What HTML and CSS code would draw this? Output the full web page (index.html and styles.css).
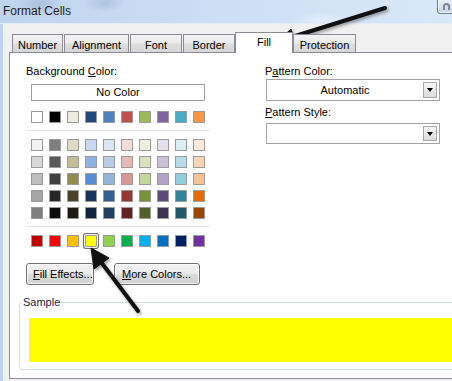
FILE: index.html
```html
<!DOCTYPE html>
<html>
<head>
<meta charset="utf-8">
<link rel="stylesheet" href="styles.css">
</head>
<body>
<div class="window">
  <div class="titlebar">
    <span class="title">Format Cells</span>
    <span class="helpbtn"><span class="helpglyph"></span></span>
  </div>
  <div class="client">
    <div class="tabs">
      <div class="tab t-number">Number</div>
      <div class="tab t-align">Alignment</div>
      <div class="tab t-font">Font</div>
      <div class="tab t-border">Border</div>
      <div class="tab active t-fill">Fill</div>
      <div class="tab t-prot">Protection</div>
    </div>
    <div class="panel">
      <div class="top">
        <div class="left">
          <div class="label">Background <u>C</u>olor:</div>
          <div class="nocolor">No Color</div>
          <div class="swrow">
            <span class="sw" style="background:#ffffff"></span>
            <span class="sw" style="background:#000000"></span>
            <span class="sw" style="background:#eeece1"></span>
            <span class="sw" style="background:#1f497d"></span>
            <span class="sw" style="background:#4f81bd"></span>
            <span class="sw" style="background:#c0504d"></span>
            <span class="sw" style="background:#9bbb59"></span>
            <span class="sw" style="background:#8064a2"></span>
            <span class="sw" style="background:#4bacc6"></span>
            <span class="sw" style="background:#f79646"></span>
          </div>
          <div class="sep"></div>
          <div class="swgrid">
            <span class="sw" style="background:#f2f2f2"></span>
            <span class="sw" style="background:#7f7f7f"></span>
            <span class="sw" style="background:#ddd9c3"></span>
            <span class="sw" style="background:#c6d9f0"></span>
            <span class="sw" style="background:#dbe5f1"></span>
            <span class="sw" style="background:#f2dcdb"></span>
            <span class="sw" style="background:#ebf1dd"></span>
            <span class="sw" style="background:#e5e0ec"></span>
            <span class="sw" style="background:#dbeef3"></span>
            <span class="sw" style="background:#fdeada"></span>

            <span class="sw" style="background:#d8d8d8"></span>
            <span class="sw" style="background:#595959"></span>
            <span class="sw" style="background:#c4bd97"></span>
            <span class="sw" style="background:#8db3e2"></span>
            <span class="sw" style="background:#b8cce4"></span>
            <span class="sw" style="background:#e5b9b7"></span>
            <span class="sw" style="background:#d7e3bc"></span>
            <span class="sw" style="background:#ccc1d9"></span>
            <span class="sw" style="background:#b7dde8"></span>
            <span class="sw" style="background:#fbd5b5"></span>

            <span class="sw" style="background:#bfbfbf"></span>
            <span class="sw" style="background:#3f3f3f"></span>
            <span class="sw" style="background:#938953"></span>
            <span class="sw" style="background:#548dd4"></span>
            <span class="sw" style="background:#95b3d7"></span>
            <span class="sw" style="background:#d99694"></span>
            <span class="sw" style="background:#c3d69b"></span>
            <span class="sw" style="background:#b2a2c7"></span>
            <span class="sw" style="background:#92cddc"></span>
            <span class="sw" style="background:#fac08f"></span>

            <span class="sw" style="background:#a5a5a5"></span>
            <span class="sw" style="background:#262626"></span>
            <span class="sw" style="background:#494429"></span>
            <span class="sw" style="background:#17365d"></span>
            <span class="sw" style="background:#366092"></span>
            <span class="sw" style="background:#953734"></span>
            <span class="sw" style="background:#76923c"></span>
            <span class="sw" style="background:#5f497a"></span>
            <span class="sw" style="background:#31859b"></span>
            <span class="sw" style="background:#e36c09"></span>

            <span class="sw" style="background:#7f7f7f"></span>
            <span class="sw" style="background:#0c0c0c"></span>
            <span class="sw" style="background:#1d1b10"></span>
            <span class="sw" style="background:#0f243e"></span>
            <span class="sw" style="background:#244061"></span>
            <span class="sw" style="background:#632423"></span>
            <span class="sw" style="background:#4f6128"></span>
            <span class="sw" style="background:#3f3151"></span>
            <span class="sw" style="background:#205867"></span>
            <span class="sw" style="background:#974806"></span>
          </div>
          <div class="sep"></div>
          <div class="swrow std">
            <span class="sw" style="background:#c00000"></span>
            <span class="sw" style="background:#ff0000"></span>
            <span class="sw" style="background:#ffc000"></span>
            <span class="sw selected" style="background:#ffff00"></span>
            <span class="sw" style="background:#92d050"></span>
            <span class="sw" style="background:#00b050"></span>
            <span class="sw" style="background:#00b0f0"></span>
            <span class="sw" style="background:#0070c0"></span>
            <span class="sw" style="background:#002060"></span>
            <span class="sw" style="background:#7030a0"></span>
          </div>
          <div class="btnrow">
            <div class="btn b-fill"><u>F</u>ill Effects...</div>
            <div class="btn b-more"><u>M</u>ore Colors...</div>
          </div>
        </div>
        <div class="right">
          <div class="label">P<u>a</u>ttern Color:</div>
          <div class="combo c1"><span class="ctext">Automatic</span><span class="cbtn"><span class="tri"></span></span></div>
          <div class="label l2"><u>P</u>attern Style:</div>
          <div class="combo c2"><span class="ctext"></span><span class="cbtn"><span class="tri"></span></span></div>
        </div>
      </div>
      <fieldset class="sample">
        <legend>Sample</legend>
        <div class="fillbox"></div>
      </fieldset>
    </div>
  </div>
  <svg class="arrows" width="452" height="381" viewBox="0 0 452 381">
    <defs>
      <filter id="blur" x="-20%" y="-20%" width="140%" height="140%">
        <feGaussianBlur stdDeviation="1.6"/>
      </filter>
    </defs>
    <g transform="translate(1.5,2)" filter="url(#blur)" fill="#555" stroke="#555" opacity="0.55">
      <line x1="385" y1="8" x2="292" y2="37" stroke-width="4" stroke-linecap="round"/>
      <polygon points="277,42 296,46 291,29"/>
      <line x1="138" y1="311" x2="101" y2="262" stroke-width="4" stroke-linecap="round"/>
      <polygon points="91,248 94,269 109,258"/>
    </g>
    <g fill="#111" stroke="#111">
      <line x1="385" y1="8" x2="292" y2="37" stroke-width="4" stroke-linecap="round"/>
      <polygon points="277,42 296,46 291,29" stroke-width="1" stroke-linejoin="round"/>
      <line x1="138" y1="311" x2="101" y2="262" stroke-width="4" stroke-linecap="round"/>
      <polygon points="91,248 94,269 109,258" stroke-width="1" stroke-linejoin="round"/>
    </g>
  </svg>
</div>
</body>
</html>
```

FILE: styles.css
```css
* { box-sizing: border-box; }
html, body { margin: 0; padding: 0; }
body {
  font-family: "Liberation Sans", Arial, sans-serif;
  font-size: 11px;
  color: #000;
  background: #f0f0f0;
}
.window {
  position: relative;
  width: 452px;
  height: 381px;
  overflow: hidden;
  display: flex;
  flex-direction: column;
  background: #f0f0f0;
}
.titlebar {
  position: relative;
  height: 24px;
  flex: none;
  padding-left: 3px;
  background:
    radial-gradient(ellipse 22px 10px at 40px 4px, rgba(150,175,205,0.55), rgba(150,175,205,0) 100%),
    radial-gradient(ellipse 20px 9px at 105px 3px, rgba(150,175,205,0.5), rgba(150,175,205,0) 100%),
    radial-gradient(ellipse 30px 8px at 320px 20px, rgba(255,255,255,0.4), rgba(255,255,255,0) 100%),
    linear-gradient(to right, #bfd5ec 0%, #c9ddf2 40%, #d3e4f6 75%, #d9e8f7 100%);
  border-bottom: 1px solid #e4edf7;
}
.title {
  display: block;
  font-family: "Liberation Sans", Arial, sans-serif;
  font-size: 12px;
  line-height: 14px;
  padding-top: 4px;
  color: #1e1e1e;
}
.helpbtn {
  position: absolute;
  left: 437px;
  top: -4px;
  width: 26px;
  height: 18px;
  border: 1px solid #6c7f97;
  border-radius: 3px;
  background: linear-gradient(#eef3f9, #c9d6e5);
  box-shadow: inset 0 0 0 1px rgba(255,255,255,0.7);
}
.helpglyph {
  position: absolute;
  left: 5px;
  top: 6px;
  width: 7px;
  height: 7px;
  border: 2px solid #7a8797;
  border-bottom: none;
  border-radius: 4px 4px 0 0;
}
.client {
  flex: 1;
  display: flex;
  flex-direction: column;
  padding: 8px 0 2px 6px;
  border-left: 3px solid #bcd3eb;
  background: #f0f0f0;
}
.tabs {
  display: flex;
  align-items: flex-end;
  height: 21px;
  margin-bottom: -1px;
  padding-left: 3px;
  position: relative;
  z-index: 1;
}
.tab {
  height: 18px;
  margin-bottom: 1px;
  margin-right: 1px;
  padding-top: 3px;
  line-height: 14px;
  text-align: center;
  border: 1px solid #898c95;
  border-bottom: none;
  background: linear-gradient(#f3f3f3 0%, #ebebeb 45%, #dedede 55%, #d6d6d6 100%);
  white-space: nowrap;
}
.t-number { width: 51px; }
.t-align { width: 65px; }
.t-font { width: 52px; }
.t-border { width: 52px; margin-right: 0; }
.tab.active {
  height: 21px;
  margin-bottom: 0;
  margin-right: 0;
  width: 58px;
  padding-top: 2px;
  background: #fff;
  position: relative;
  z-index: 2;
}
.t-prot { width: 63px; }
.panel {
  width: 470px;
  height: 327px;
  flex: none;
  border: 1px solid #898c95;
  background: #fff;
  padding: 10px 0 0 16px;
  display: flex;
  flex-direction: column;
}
.top {
  display: flex;
  gap: 55px;
}
.left {
  width: 184px;
  display: flex;
  flex-direction: column;
}
.label {
  height: 14px;
  line-height: 14px;
  white-space: nowrap;
}
.left .label { margin-top: 1px; }
.nocolor {
  margin: 6px 0 0 5px;
  width: 174px;
  height: 17px;
  border: 1px solid #a0a0a0;
  text-align: center;
  line-height: 15px;
  background: #fff;
}
.swrow {
  display: flex;
  gap: 6px;
  margin: 10px 0 0 5px;
}
.sw {
  display: block;
  width: 12px;
  height: 12px;
  border: 1px solid #9b9b9b;
  flex: none;
}
.sw.selected {
  border-radius: 1px;
  box-shadow: 0 0 0 1px #f4f4f4, 0 0 0 2px #6f6f6f;
}
.sep {
  height: 1px;
  background: #e2e2e2;
  margin-top: 7px;
}
.swgrid {
  display: grid;
  grid-template-columns: repeat(10, 12px);
  column-gap: 6px;
  row-gap: 5px;
  margin: 8px 0 0 5px;
}
.swrow.std { margin-top: 8px; }
.btnrow {
  display: flex;
  gap: 20px;
  margin-top: 16px;
}
.btn {
  height: 22px;
  line-height: 20px;
  border: 1px solid #707070;
  border-radius: 3px;
  background: linear-gradient(#f2f2f2 0%, #ebebeb 48%, #dddddd 52%, #cfcfcf 100%);
  box-shadow: inset 0 0 0 1px rgba(255,255,255,0.8);
  padding-left: 6px;
  white-space: nowrap;
}
.b-fill { width: 68px; padding-left: 6px; }
.b-more { width: 86px; padding-left: 7px; }
.right {
  width: 176px;
  display: flex;
  flex-direction: column;
}
.right .label { margin-top: 1px; }
.right .label.l2 { margin-top: 4px; }
.combo {
  margin: 1px 0 0 1px;
  width: 174px;
  height: 22px;
  border: 1px solid #a3a3a3;
  background: #fff;
  display: flex;
  align-items: center;
  padding: 2px 2px 2px 0;
}
.combo.c2 { height: 21px; margin-top: 4px; }
.ctext {
  flex: 1;
  text-align: center;
  line-height: 14px;
}
.cbtn {
  width: 14px;
  height: 100%;
  border: 1px solid #a8a8a8;
  background: linear-gradient(#f6f6f6, #dcdcdc);
  display: flex;
  align-items: center;
  justify-content: center;
}
.tri {
  width: 0;
  height: 0;
  border-left: 3.5px solid transparent;
  border-right: 3.5px solid transparent;
  border-top: 4px solid #000;
}
.sample {
  margin: 10px 0 0 -7px;
  padding: 9px 0 7px 9px;
  border: 1px solid #d5dfe5;
  border-radius: 3px;
  min-width: 0;
  width: 470px;
}
.sample legend {
  margin-left: -7px;
  padding: 0 1px;
  line-height: 14px;
  color: #1b1b4a;
}
.fillbox {
  height: 44px;
  background: #ffff00;
}
.arrows {
  position: absolute;
  left: 0;
  top: 0;
  pointer-events: none;
}
```
